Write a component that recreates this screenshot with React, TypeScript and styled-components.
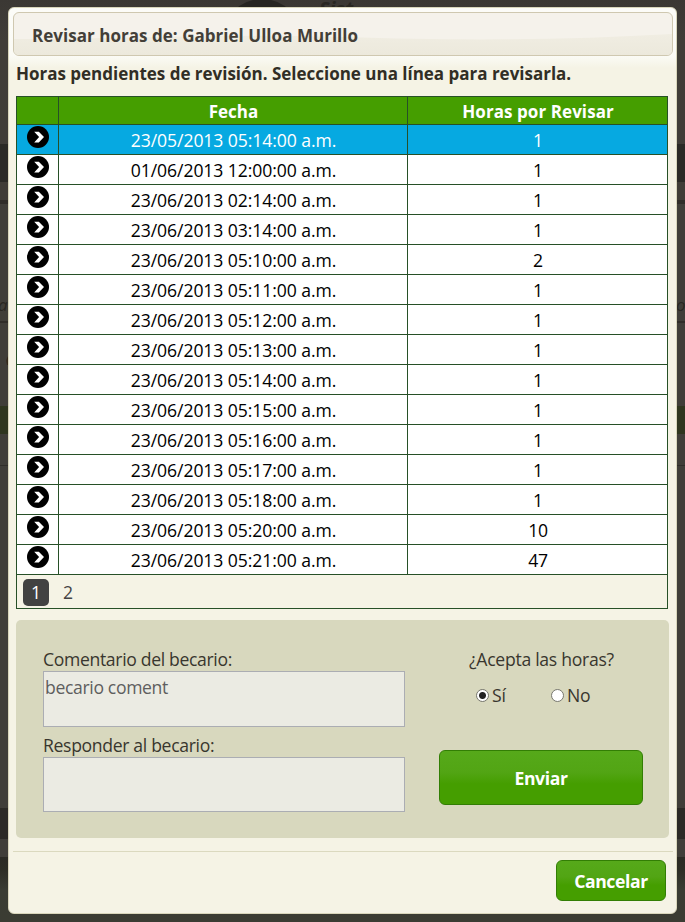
import React, { useState } from "react";
import styled, { createGlobalStyle, css } from "styled-components";

const GlobalStyle = createGlobalStyle`
  *, *::before, *::after { box-sizing: border-box; }
  html, body { margin: 0; }
  body {
    width: 685px;
    height: 922px;
    overflow: hidden;
    font-family: "Open Sans", "Noto Sans", sans-serif;
    font-size: 17.6px;
    color: #362b36;
  }
`;

const Page = styled.div`
  position: relative;
  width: 685px;
  height: 922px;
  padding: 7px 8px 8px;
  overflow: hidden;
  background: linear-gradient(
    #3b3834 0, #403d37 40px, #403d38 144px,
    #2b2a26 144px, #2b2a26 182px,
    #403d37 182px, #403d37 200px,
    #302d29 200px, #302d29 204px,
    #403e39 204px, #403e39 321px,
    #302d29 321px, #302d29 323px,
    #403e39 323px, #403e39 406px,
    #2f361f 406px, #2f361f 434px,
    #403e39 434px, #403e39 465px,
    #302e2a 465px, #302e2a 466px,
    #403e39 466px, #403e39 808px,
    #2c2a26 808px, #2c2a26 839px,
    #403e39 839px, #403e39 857px,
    #2b2a24 857px, #2d2d25 869px,
    #3a3c33 890px, #3b3c33 922px
  );
`;

const Backdrop = styled.svg`
  position: absolute;
  inset: 0;
`;

const Dialog = styled.section`
  position: relative;
  display: flex;
  flex-direction: column;
  width: 669px;
  height: 907px;
  padding: 4px 3px 4px 4px;
  border: 1px solid #d9d6bb;
  border-radius: 6px;
  background: linear-gradient(#fcfcf8 0, #fbfbf5 48px, #f5f3e5 60px);
`;

const TitleBar = styled.header`
  flex: none;
  height: 44px;
  padding-left: 18px;
  border: 1px solid #cfc8b0;
  border-radius: 6px;
  overflow: hidden;
  display: grid;
  background: #f5f2eb;

  > * { grid-area: 1 / 1; }
`;

const Wave = styled.svg`
  display: block;
  width: 658px;
  height: 42px;
  margin-left: -18px;
`;

const Title = styled.h1`
  margin: 0;
  font-size: 17px;
  font-weight: 700;
  line-height: 46px;
  height: 42px;
  letter-spacing: 0.03px;
  color: #433f38;
  z-index: 1;
`;

const Instruction = styled.h2`
  margin: 0 0 0 3px;
  height: 40px;
  font-size: 17px;
  font-weight: 700;
  line-height: 35px;
  letter-spacing: -0.01px;
  color: #312e25;
`;

const Grid = styled.div`
  flex: none;
  width: 652px;
  margin-left: 3px;
  border: 1px solid #275027;
  color: #000;
`;

const rowColumns = css`
  display: grid;
  grid-template-columns: 41px 349px 260px;
  border-bottom: 1px solid #275027;
`;

const HeadRow = styled.div`
  ${rowColumns}
  height: 28px;
  background: #459e00;
  color: #fff;
  font-size: 17px;
  font-weight: 700;
  line-height: 30px;
`;

const Row = styled.div<{ $selected: boolean }>`
  ${rowColumns}
  height: 30px;
  line-height: 30px;
  cursor: pointer;
  background: ${(p) => (p.$selected ? "#06a9e1" : "#fff")};
  color: ${(p) => (p.$selected ? "#fff" : "#000")};
`;

const Cell = styled.div<{ $spacing?: number }>`
  overflow: hidden;
  text-align: center;
  white-space: nowrap;
  letter-spacing: ${(p) => p.$spacing ?? 0}px;

  & + & {
    padding-left: 1px;
    border-left: 1px solid #275027;
  }
`;

const ArrowIcon = styled.svg`
  display: block;
  width: 22px;
  height: 22px;
  margin: 1px 0 0 10px;
`;

const Pager = styled.div`
  display: flex;
  height: 33px;
  padding: 4px 6px;
  gap: 6px;
  background: #f5f3e5;
`;

const PageButton = styled.button<{ $active: boolean }>`
  width: 26px;
  height: 27px;
  padding: 0;
  border: 0;
  border-radius: 5px;
  background: ${(p) => (p.$active ? "#424242" : "transparent")};
  color: ${(p) => (p.$active ? "#fff" : "#444")};
  font: 17.6px/27px "Open Sans", sans-serif;
`;

const ReviewPanel = styled.form`
  flex: none;
  display: flex;
  width: 653px;
  height: 218px;
  margin: 11px 0 0 3px;
  padding: 29px 26px 0 27px;
  border-radius: 5px;
  background: #d8d8be;
`;

const Comments = styled.div`
  width: 362px;
`;

const Field = styled.label`
  display: block;
  height: 86px;
  color: #38362e;
`;

const FieldName = styled.span<{ $spacing: number }>`
  display: block;
  height: 22px;
  line-height: 20px;
  letter-spacing: ${(p) => p.$spacing}px;
  white-space: nowrap;
`;

const TextBox = styled.textarea<{ $height: number }>`
  display: block;
  width: 362px;
  height: ${(p) => p.$height}px;
  padding: 3px 1px;
  border: 1px solid #abadb3;
  border-radius: 0;
  resize: none;
  outline: none;
  background: #ebebe3;
  color: #5e5e5e;
  font: 17.6px/25px "Open Sans", sans-serif;
  letter-spacing: -0.35px;
`;

const Decision = styled.div`
  display: flex;
  flex-direction: column;
  width: 204px;
  margin-left: 34px;
  color: #38362e;
`;

const Question = styled.div`
  height: 22px;
  margin-left: 30px;
  line-height: 20px;
  letter-spacing: -0.28px;
`;

const Options = styled.div`
  display: flex;
  gap: 45px;
  margin: 13px 0 0 37px;
  height: 22px;
`;

const Option = styled.label`
  display: flex;
  align-items: center;
  gap: 3px;
  letter-spacing: -0.1px;
  line-height: 22px;
`;

const Radio = styled.input`
  appearance: none;
  width: 13px;
  height: 13px;
  margin: 0;
  border: 1px solid #77776f;
  border-radius: 50%;
  background: #fff;

  &:checked {
    background: radial-gradient(circle at center, #222 0 3px, #fff 4px);
  }
`;

const Button = styled.button<{ $width: number; $height: number }>`
  width: ${(p) => p.$width}px;
  height: ${(p) => p.$height}px;
  padding: 0;
  border: 1px solid #327e04;
  border-radius: 6px;
  background: linear-gradient(#56a91a 0, #52a514 40%, #459e00 62%, #459e00 100%);
  color: #fff;
  font: 700 17.6px/24px "Open Sans", sans-serif;
  letter-spacing: -0.4px;
`;

const SendButton = styled(Button)`
  margin-top: 44px;
`;

const Footer = styled.footer`
  display: flex;
  justify-content: flex-end;
  margin-top: 13px;
  padding: 8px 7px 0 0;
  border-top: 1px solid #dbd9bf;
`;

const records: [string, number][] = [
  ["23/05/2013 05:14:00 a.m.", 1],
  ["01/06/2013 12:00:00 a.m.", 1],
  ["23/06/2013 02:14:00 a.m.", 1],
  ["23/06/2013 03:14:00 a.m.", 1],
  ["23/06/2013 05:10:00 a.m.", 2],
  ["23/06/2013 05:11:00 a.m.", 1],
  ["23/06/2013 05:12:00 a.m.", 1],
  ["23/06/2013 05:13:00 a.m.", 1],
  ["23/06/2013 05:14:00 a.m.", 1],
  ["23/06/2013 05:15:00 a.m.", 1],
  ["23/06/2013 05:16:00 a.m.", 1],
  ["23/06/2013 05:17:00 a.m.", 1],
  ["23/06/2013 05:18:00 a.m.", 1],
  ["23/06/2013 05:20:00 a.m.", 10],
  ["23/06/2013 05:21:00 a.m.", 47],
];

const SelectArrow = () => (
  <ArrowIcon viewBox="0 0 22 22" aria-hidden>
    <circle cx="11" cy="11" r="11" fill="#000" />
    <path d="M7.2 5.8h4.6l5.2 5.2-5.2 5.4H7.2l4.9-5.4z" fill="#fff" />
  </ArrowIcon>
);

export default function App() {
  const [selected, setSelected] = useState(0);
  const [accepted, setAccepted] = useState(true);
  const [page, setPage] = useState(1);

  return (
    <>
      <GlobalStyle />
      <Page>
        <Backdrop width="685" height="922" aria-hidden>
          <circle cx="262" cy="39" r="40" fill="#272622" />
          <g fill="#292722" fontFamily="Open Sans" fontStyle="italic">
            <text x="319" y="16" fontSize="20" fontWeight="700">Sist</text>
            <text x="-2" y="311" fontSize="17">ad</text>
            <text x="676" y="311" fontSize="17">o</text>
          </g>
          <path d="M9 355q-4 4-2 10h3z" fill="#34281b" />
        </Backdrop>
        <Dialog>
          <TitleBar>
            <Wave viewBox="0 0 658 42" preserveAspectRatio="none" aria-hidden>
              <defs>
                <linearGradient id="wave" x1="0" y1="0" x2="0" y2="1">
                  <stop offset="0" stopColor="#f0ede2" />
                  <stop offset="1" stopColor="#ece9dc" />
                </linearGradient>
              </defs>
              <path d="M0 26C110 26 210 20 330 24S550 27 658 21V42H0z" fill="url(#wave)" />
            </Wave>
            <Title>Revisar horas de: Gabriel Ulloa Murillo</Title>
          </TitleBar>
          <Instruction>Horas pendientes de revisión. Seleccione una línea para revisarla.</Instruction>
          <Grid>
            <HeadRow>
              <Cell />
              <Cell>Fecha</Cell>
              <Cell $spacing={0.07}>Horas por Revisar</Cell>
            </HeadRow>
            {records.map(([date, hours], i) => (
              <Row key={date} $selected={i === selected} onClick={() => setSelected(i)}>
                <Cell><SelectArrow /></Cell>
                <Cell $spacing={-0.08}>{date}</Cell>
                <Cell $spacing={-0.3}>{hours}</Cell>
              </Row>
            ))}
            <Pager>
              {[1, 2].map((n) => (
                <PageButton key={n} $active={n === page} onClick={() => setPage(n)}>{n}</PageButton>
              ))}
            </Pager>
          </Grid>
          <ReviewPanel onSubmit={(e) => e.preventDefault()}>
            <Comments>
              <Field>
                <FieldName $spacing={-0.34}>Comentario del becario:</FieldName>
                <TextBox $height={56} readOnly value="becario coment" />
              </Field>
              <Field>
                <FieldName $spacing={-0.33}>Responder al becario:</FieldName>
                <TextBox $height={55} />
              </Field>
            </Comments>
            <Decision>
              <Question>¿Acepta las horas?</Question>
              <Options>
                <Option>
                  <Radio type="radio" name="accept" checked={accepted} onChange={() => setAccepted(true)} />
                  Sí
                </Option>
                <Option>
                  <Radio type="radio" name="accept" checked={!accepted} onChange={() => setAccepted(false)} />
                  No
                </Option>
              </Options>
              <SendButton $width={204} $height={55}>Enviar</SendButton>
            </Decision>
          </ReviewPanel>
          <Footer>
            <Button $width={110} $height={41}>Cancelar</Button>
          </Footer>
        </Dialog>
      </Page>
    </>
  );
}
